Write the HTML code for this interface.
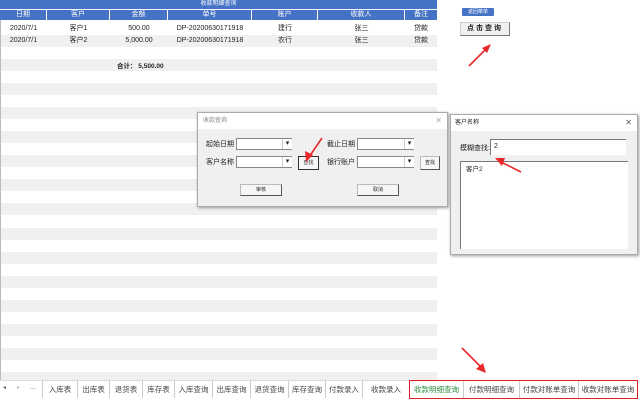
<!DOCTYPE html>
<html><head><meta charset="utf-8"><style>
*{margin:0;padding:0;box-sizing:border-box}
body{width:640px;height:400px;position:relative;overflow:hidden;background:#fff;font-family:"Liberation Sans","Noto Sans CJK SC",sans-serif;font-size:7px;color:#222}
.a{position:absolute}
.band{position:absolute;left:0;width:437px;height:12px;background:#f0f0f0}
.hd{position:absolute;top:10px;height:10px;background:#4472c4;color:#fff;text-align:center;line-height:10px;border-right:1px solid #fff}
.c{position:absolute;text-align:center;line-height:10px}
.tab{position:absolute;top:381px;height:17px;line-height:17px;text-align:center;color:#444;border-right:1px solid #ccc;font-size:7.5px}
.combo{position:absolute;height:12px;background:#fff;border:1px solid #888;border-right:none}
.combo:after{content:"▾";position:absolute;right:0;top:0;width:9px;height:10px;font-size:7px;line-height:10px;text-align:center;border-left:1px solid #ccc}
.btn{position:absolute;background:#f6f6f6;border:1px solid #bbb;border-right:1px solid #555;border-bottom:1px solid #555;text-align:center;font-size:5px}
</style></head><body>
<div class="a" style="left:0;top:0;width:437px;height:9px;background:#4472c4;color:#fff;text-align:center;font-size:6px;line-height:9px">收款明细查询</div>
<div class="a" style="left:0;top:9px;width:437px;height:1px;background:#fff"></div>
<div class="hd" style="left:0;width:47px">日期</div>
<div class="hd" style="left:47px;width:63px">客户</div>
<div class="hd" style="left:110px;width:58px">金额</div>
<div class="hd" style="left:168px;width:84px">单号</div>
<div class="hd" style="left:252px;width:66px">账户</div>
<div class="hd" style="left:318px;width:87px">收款人</div>
<div class="hd" style="left:405px;width:32px;border-right:none">备注</div>
<div class="band" style="top:35px"></div><div class="band" style="top:59px"></div><div class="band" style="top:83px"></div><div class="band" style="top:107px"></div><div class="band" style="top:131px"></div><div class="band" style="top:155px"></div><div class="band" style="top:179px"></div><div class="band" style="top:203px"></div><div class="band" style="top:228px"></div><div class="band" style="top:252px"></div><div class="band" style="top:276px"></div><div class="band" style="top:300px"></div><div class="band" style="top:324px"></div><div class="band" style="top:348px"></div><div class="band" style="top:372px"></div>
<div class="a" style="left:0;top:20px;width:1px;height:360px;background:#bbb"></div>
<div class="c" style="left:0;width:47px;top:24px">2020/7/1</div><div class="c" style="left:47px;width:63px;top:24px">客户1</div><div class="c" style="left:110px;width:58px;top:24px">500.00</div><div class="c" style="left:168px;width:84px;top:24px">DP-20200630171918</div><div class="c" style="left:252px;width:66px;top:24px">建行</div><div class="c" style="left:318px;width:87px;top:24px">张三</div><div class="c" style="left:405px;width:32px;top:24px">贷款</div>
<div class="c" style="left:0;width:47px;top:36px">2020/7/1</div><div class="c" style="left:47px;width:63px;top:36px">客户2</div><div class="c" style="left:110px;width:58px;top:36px">5,000.00</div><div class="c" style="left:168px;width:84px;top:36px">DP-20200630171918</div><div class="c" style="left:252px;width:66px;top:36px">农行</div><div class="c" style="left:318px;width:87px;top:36px">张三</div><div class="c" style="left:405px;width:32px;top:36px">贷款</div>
<div class="a" style="left:117px;top:60px;font-weight:bold;font-size:6.5px">合计： 5,500.00</div>
<div class="a" style="left:462px;top:8px;width:32px;height:8px;background:#4472c4;color:#fff;font-size:5px;line-height:8px;text-align:center;border-radius:1px">返回菜单</div>
<div class="a" style="left:460px;top:22px;width:50px;height:14px;background:#f0f0f0;border:1px solid #ccc;border-right:1px solid #777;border-bottom:1px solid #777;font-weight:bold;font-size:7px;line-height:12px;text-align:center;letter-spacing:2px">点击查询</div>
<div class="a" style="left:197px;top:112px;width:251px;height:95px;background:#f0f0f0;border:1px solid #aaa;box-shadow:1px 1px 3px #999">
<div class="a" style="left:0;top:0;width:249px;height:16px;background:#fff;color:#888;font-size:6px;line-height:16px;padding-left:5px">收款查询<span style="position:absolute;right:5px;color:#aaa;font-size:8px">✕</span></div>
<div class="a" style="left:8px;top:26px">起始日期</div><div class="combo" style="left:38px;top:25px;width:56px"></div>
<div class="a" style="left:129px;top:26px">截止日期</div><div class="combo" style="left:159px;top:25px;width:57px"></div>
<div class="a" style="left:8px;top:44px">客户名称</div><div class="combo" style="left:38px;top:43px;width:56px"></div>
<div class="btn" style="left:100px;top:43px;width:21px;height:14px;line-height:12px;border:1px solid #333">查找</div>
<div class="a" style="left:129px;top:44px">银行账户</div><div class="combo" style="left:159px;top:43px;width:57px"></div>
<div class="btn" style="left:222px;top:43px;width:20px;height:14px;line-height:12px">查找</div>
<div class="btn" style="left:42px;top:71px;width:42px;height:12px;line-height:10px">审核</div>
<div class="btn" style="left:159px;top:71px;width:42px;height:12px;line-height:10px">取消</div>
</div>
<div class="a" style="left:450px;top:114px;width:188px;height:141px;background:#f0f0f0;border:1px solid #aaa;box-shadow:1px 1px 3px #999">
<div class="a" style="left:0;top:0;width:186px;height:16px;background:#fff;font-size:6px;line-height:16px;padding-left:4px">客户名称<span style="position:absolute;right:5px;font-size:8px;color:#555">✕</span></div>
<div class="a" style="left:9px;top:28px;font-size:7px">模糊查找:</div>
<div class="a" style="left:39px;top:24px;width:136px;height:16px;background:#fff;border-top:1px solid #777;border-left:1px solid #777;padding-left:3px;line-height:14px;font-size:7px">2</div>
<div class="a" style="left:9px;top:46px;width:168px;height:88px;background:#fff;border-top:1px solid #777;border-left:1px solid #777;padding:1px 5px;font-size:6.5px">客户2</div>
</div>
<div class="a" style="left:0;top:380px;width:640px;height:20px;background:#fff;border-top:1px solid #ddd"></div>
<div class="a" style="left:3px;top:384px;color:#666;font-size:6px">◂</div><div class="a" style="left:17px;top:384px;color:#bbb;font-size:6px">▸</div><div class="a" style="left:30px;top:384px;color:#666">...</div>
<div class="tab" style="left:42px;width:36px;border-left:1px solid #ccc">入库表</div>
<div class="tab" style="left:78px;width:32px">出库表</div>
<div class="tab" style="left:110px;width:33px">退货表</div>
<div class="tab" style="left:143px;width:32px">库存表</div>
<div class="tab" style="left:175px;width:38px">入库查询</div>
<div class="tab" style="left:213px;width:38px">出库查询</div>
<div class="tab" style="left:251px;width:38px">退货查询</div>
<div class="tab" style="left:289px;width:37px">库存查询</div>
<div class="tab" style="left:326px;width:37px">付款录入</div>
<div class="tab" style="left:363px;width:47px">收款录入</div>
<div class="tab" style="left:410px;width:54px;color:#2e8b3e;background:#fff">收款明细查询</div>
<div class="tab" style="left:464px;width:56px">付款明细查询</div>
<div class="tab" style="left:520px;width:59px">付款对账单查询</div>
<div class="tab" style="left:579px;width:58px;border-right:none">收款对账单查询</div>
<div class="a" style="left:409px;top:380px;width:229px;height:19px;border:1.5px solid #e02020"></div>
<svg class="a" style="left:0;top:0" width="640" height="400">
<g stroke="#e8282a" stroke-width="1.6" fill="#e8282a">
<line x1="469" y1="66" x2="487" y2="48"/><polygon points="491,44 482,48 487,53" stroke="none"/>
<line x1="322" y1="138" x2="309" y2="157"/><polygon points="306,162 305,151 313,155" stroke="none"/>
<line x1="521" y1="172" x2="501" y2="162"/><polygon points="495,158 505,158 502,166" stroke="none"/>
<line x1="462" y1="348" x2="482" y2="368"/><polygon points="486,373 476,369 483,363" stroke="none"/>
</g></svg>
</body></html>
